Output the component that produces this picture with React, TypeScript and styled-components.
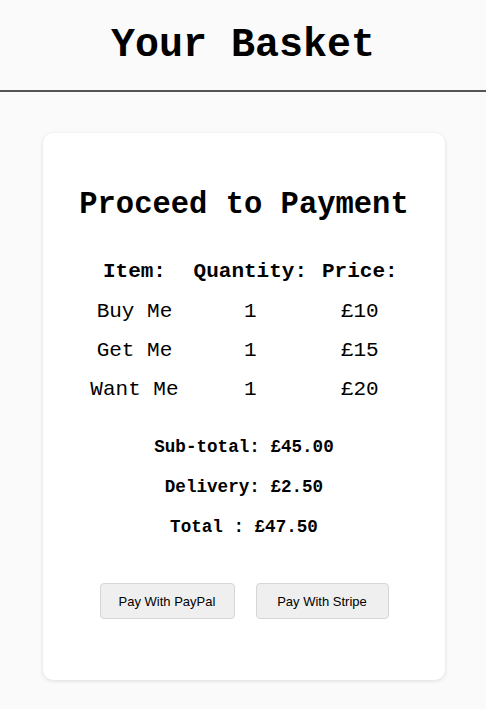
import * as React from 'react';
import styled, { createGlobalStyle } from 'styled-components';

const GlobalStyle = createGlobalStyle`
  html, body {
    margin: 0;
    padding: 0;
    background: #fafafa;
  }
  body {
    font-family: "Liberation Mono", "Courier New", monospace;
    color: #000;
  }
`;

const Page = styled.div`
  min-height: 709px;
  background: #fafafa;
`;

const Header = styled.header`
  padding: 23px 0 21px;
  border-bottom: 2px solid #555;
  text-align: center;
`;

const Title = styled.h1`
  margin: 0;
  font-size: 40px;
  line-height: 46px;
  font-weight: bold;
`;

const Card = styled.section`
  width: 402px;
  box-sizing: border-box;
  margin: 41px 0 0 calc(50% - 200px);
  padding: 55px 20px 61px;
  background: #fff;
  border-radius: 10px;
  box-shadow: 0 1px 4px rgba(0, 0, 0, 0.12);
  display: flex;
  flex-direction: column;
  align-items: center;
`;

const Heading = styled.h2`
  margin: 0;
  font-size: 30.5px;
  line-height: 35px;
  font-weight: bold;
`;

const Table = styled.table`
  margin-top: 28px;
  border-collapse: collapse;
`;

const Cell = styled.td<{ $head?: boolean }>`
  padding: 0 7.5px;
  height: ${(p) => (p.$head ? '41px' : '39px')};
  font-size: 21px;
  line-height: 23px;
  font-weight: ${(p) => (p.$head ? 'bold' : 'normal')};
  text-align: center;
  white-space: nowrap;
`;

const Summary = styled.div`
  margin-top: 28px;
  display: flex;
  flex-direction: column;
  gap: 20px;
  align-items: center;
`;

const SummaryLine = styled.p`
  margin: 0;
  font-size: 17.6px;
  line-height: 20px;
  font-weight: bold;
  white-space: pre;
`;

const Actions = styled.div`
  margin-top: 46px;
  display: flex;
  gap: 21px;
`;

const PayButton = styled.button<{ $width: number }>`
  width: ${(p) => p.$width}px;
  height: 36px;
  background: #efefef;
  border: 1px solid #d6d6d6;
  border-radius: 4px;
  font-family: "Liberation Sans", Arial, sans-serif;
  font-size: 13px;
  color: #000;
  cursor: pointer;
`;

const items = [
  { name: 'Buy Me', qty: 1, price: 10 },
  { name: 'Get Me', qty: 1, price: 15 },
  { name: 'Want Me', qty: 1, price: 20 },
];

export default function App() {
  return (
    <Page>
      <GlobalStyle />
      <Header>
        <Title>Your Basket</Title>
      </Header>
      <Card>
        <Heading>Proceed to Payment</Heading>
        <Table>
          <tbody>
            <tr>
              <Cell $head>Item:</Cell>
              <Cell $head>Quantity:</Cell>
              <Cell $head>Price:</Cell>
            </tr>
            {items.map((it) => (
              <tr key={it.name}>
                <Cell>{it.name}</Cell>
                <Cell>{it.qty}</Cell>
                <Cell>£{it.price}</Cell>
              </tr>
            ))}
          </tbody>
        </Table>
        <Summary>
          <SummaryLine>Sub-total: £45.00</SummaryLine>
          <SummaryLine>Delivery: £2.50</SummaryLine>
          <SummaryLine>Total : £47.50</SummaryLine>
        </Summary>
        <Actions>
          <PayButton $width={135}>Pay With PayPal</PayButton>
          <PayButton $width={133}>Pay With Stripe</PayButton>
        </Actions>
      </Card>
    </Page>
  );
}
